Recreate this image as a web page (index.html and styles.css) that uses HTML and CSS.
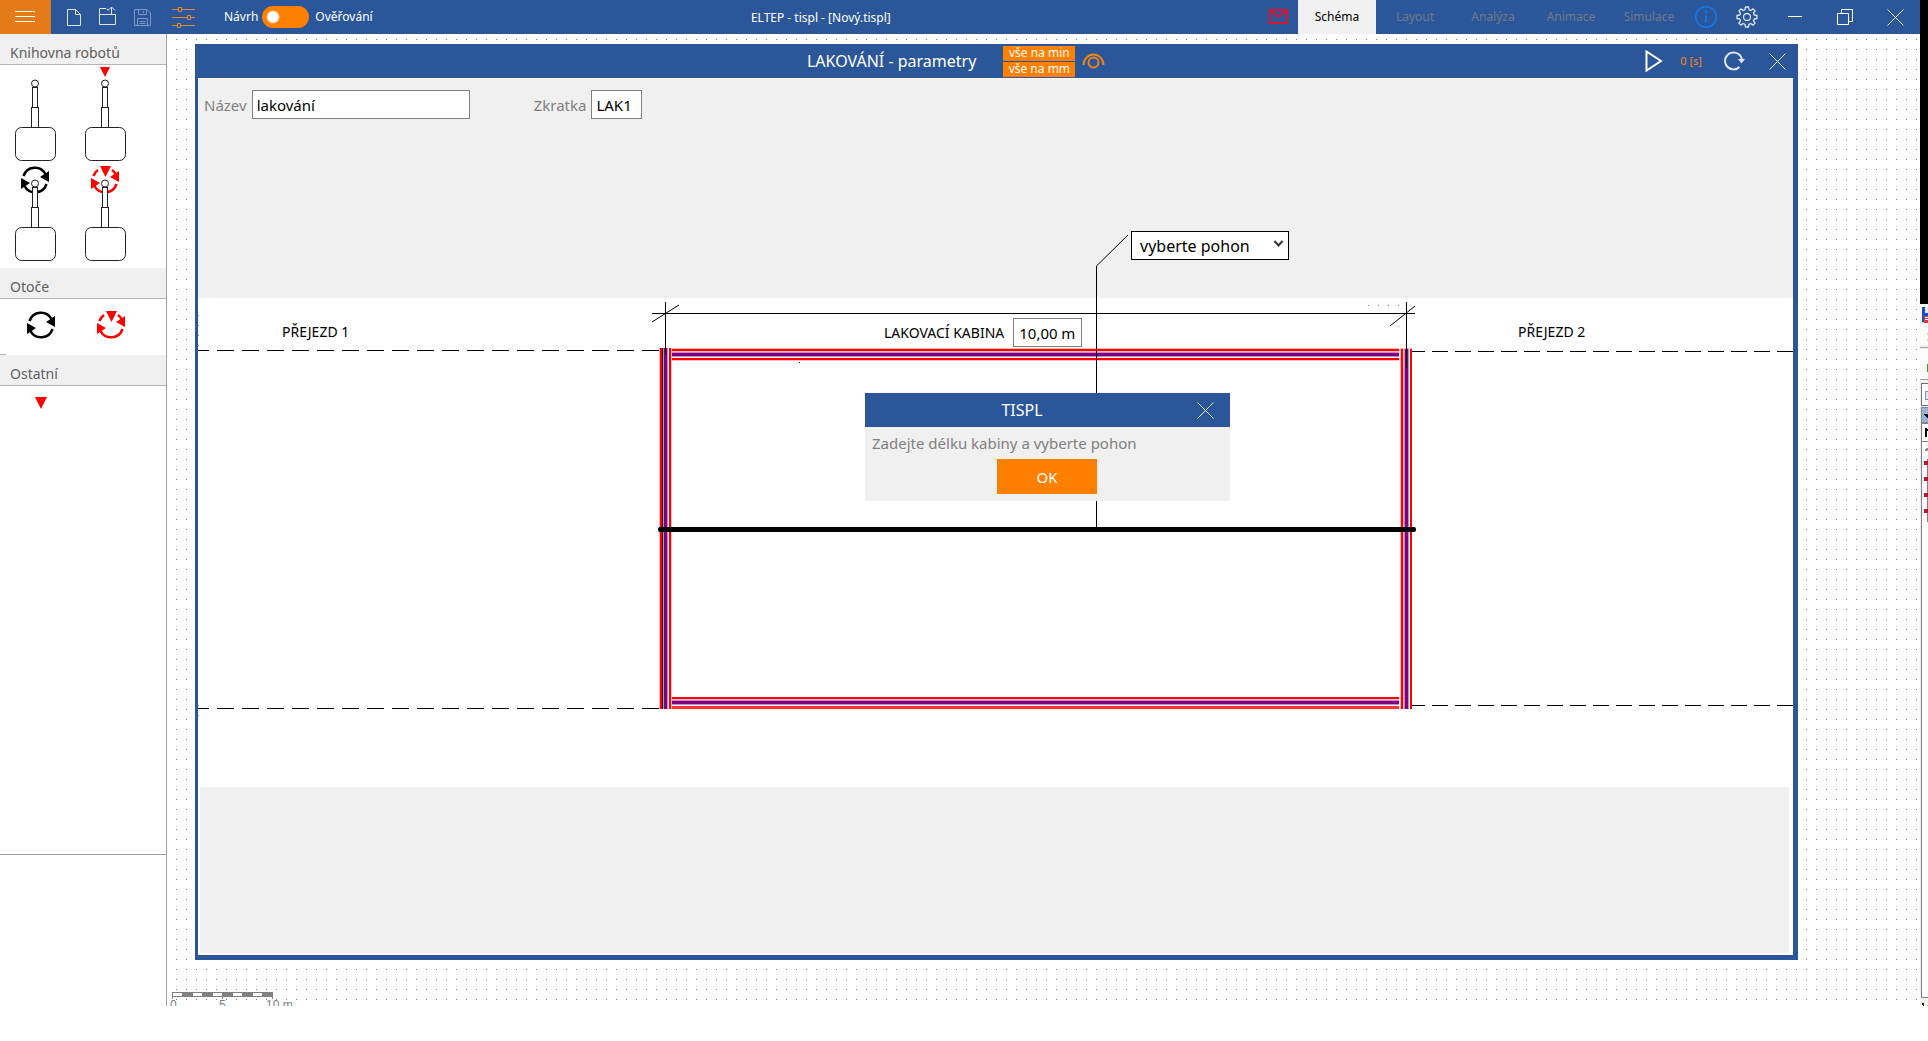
FILE: index.html
```html
<!DOCTYPE html>
<html lang="cs">
<head>
<meta charset="utf-8">
<title>ELTEP - tispl - [Nový.tispl]</title>
<link rel="stylesheet" href="styles.css">
</head>
<body>
<div class="screen">
  <div class="app">
    <header class="topbar">
      <button class="menu-btn" aria-label="Menu"><svg width="20" height="12"><path d="M0 .5H20M0 5.5H20M0 10.5H20" stroke="#fff" fill="none"/></svg></button>
      <div class="tools">
        <button class="icon-btn" aria-label="Nový"><svg width="14" height="17" fill="none" stroke="#dfe6f2"><path d="M.5 .5H8.500L13.500 5.500V16.500H.5ZM8.500 .5V5.500H13.500"/></svg></button>
        <button class="icon-btn open" aria-label="Otevřít"><svg width="17" height="20" fill="none" stroke="#dfe6f2"><path d="M9.500 3.500H8L7 2.500H.5V18.500H16.500V8.500M.5 8.500H16.500M12.500 9V1M9 4.500L12.500 1L16 4.500"/></svg></button>
        <button class="icon-btn" aria-label="Uložit"><svg width="17" height="17" fill="none" stroke="#8098c4"><path d="M.5 .5H13L16.500 4V16.500H.5ZM4.500 .5V5.500H12.500V.5M9.500 2V4M3.500 16V9.500H13.500V16M5.500 12.500H11.500M5.500 14.500H11.500"/></svg></button>
        <button class="icon-btn sliders" aria-label="Nastavení parametrů"><svg width="24" height="24" fill="none" stroke="#e88a2a"><path d="M0 3.500H7M10 3.500H23M0 11.500H15M19 11.500H23M0 19.500H5M9 19.500H23"/><path d="M6.500 1.500H9.500V5.500H6.500ZM15.500 9.500H18.500V13.500H15.500ZM5.500 17.500H8.500V21.500H5.500Z"/></svg></button>
        <label class="mode"><span>Návrh</span><input type="checkbox" role="switch"><span>Ověřování</span></label>
      </div>
      <div class="app-title">ELTEP - tispl - [Nový.tispl]</div>
      <button class="icon-btn mail" aria-label="Zpráva"><svg width="20" height="16" fill="none" stroke="#d8142c" stroke-width="2"><path d="M1 1H18V14H1ZM1 1L9.500 8L18 1"/></svg></button>
      <nav class="tabs">
        <button class="tab active">Schéma</button>
        <button class="tab">Layout</button>
        <button class="tab">Analýza</button>
        <button class="tab">Animace</button>
        <button class="tab">Simulace</button>
      </nav>
      <div class="window-btns">
        <button class="icon-btn" aria-label="Informace"><svg width="24" height="24" fill="none" stroke="#1279e8" stroke-width="1.500"><circle cx="12" cy="12" r="10.300"/><path d="M12 10.500V17.500" stroke-width="2"/><circle cx="12" cy="7" r="1" fill="#1279e8" stroke-width="1"/></svg></button>
        <button class="icon-btn" aria-label="Nastavení"><svg width="24" height="24" viewBox="0 0 24 24" fill="none" stroke="#dfe6f2" stroke-width="1.300"><circle cx="12" cy="12" r="3.500"/><path d="M10.500 2H13.500L14 4.700L15.800 5.500L18.100 3.900L20.100 5.900L18.500 8.200L19.300 10L22 10.500V13.500L19.300 14L18.500 15.800L20.100 18.100L18.100 20.100L15.800 18.500L14 19.300L13.500 22H10.500L10 19.300L8.200 18.500L5.900 20.100L3.900 18.100L5.500 15.800L4.700 14L2 13.500V10.500L4.700 10L5.500 8.200L3.900 5.900L5.900 3.900L8.200 5.500L10 4.700Z" stroke-linejoin="round"/></svg></button>
        <button class="icon-btn" aria-label="Minimalizovat"><svg width="14" height="17"><path d="M0 7.500H14" stroke="#fff"/></svg></button>
        <button class="icon-btn" aria-label="Obnovit"><svg width="17" height="17" fill="none" stroke="#fff"><path d="M.5 4.500H11.500V15.500H.5ZM4.500 4V.5H15.500V12.500H12"/></svg></button>
        <button class="icon-btn" aria-label="Zavřít"><svg width="17" height="17"><path d="M.5 .5L16.500 16.500M16.500 .5L.5 16.500" stroke="#e6ecf5"/></svg></button>
      </div>
    </header>

    <div class="workspace">
      <aside class="library">
        <h2>Knihovna robotů</h2>
        <div class="robots">
          <svg width="140" height="203" fill="none" stroke="#222">
            <defs>
              <g id="robot"><rect x="-2.500" y="22.500" width="5" height="20" fill="#fff"/><rect x="-3.500" y="42.500" width="7" height="20" fill="#fff"/><rect x="-19.500" y="62.500" width="40" height="33" rx="6"/><circle cy="18.500" r="3.500" fill="#fff"/></g>
              <g id="rotator"><path d="M-11.500 -4A12 12 0 0 1 10.500 -6" fill="none" stroke-width="2.500"/><path d="M5 -3L14 -9V2Z" stroke="none"/><path d="M11.500 4A12 12 0 0 1 -10.500 6" fill="none" stroke-width="2.500"/><path d="M-5 3L-14 9V-2Z" stroke="none"/></g>
              <g id="rotator-passive" stroke="#f00" fill="#f00"><path d="M-11.500 -4A12 12 0 0 1 -7 -10M7 -10A12 12 0 0 1 10.500 -6" fill="none" stroke-width="2.500"/><path d="M5 -3L14 -9V2Z" stroke="none"/><path d="M11.500 4A12 12 0 0 1 -10.500 6" fill="none" stroke-width="2.500"/><path d="M-5 3L-14 9V-2Z" stroke="none"/><path d="M-5 -14H6L.5 -3Z" stroke="none"/></g>
            </defs>
            <use href="#robot" x="35" y="0"/>
            <path d="M100 2H110L105 12Z" fill="#f00" stroke="none"/>
            <use href="#robot" x="105" y="0"/>
            <use href="#rotator" x="35" y="115" fill="#000" stroke="#000"/>
            <use href="#robot" x="35" y="100"/>
            <use href="#rotator-passive" x="105" y="115"/>
            <use href="#robot" x="105" y="100"/>
          </svg>
        </div>
        <h2>Otoče</h2>
        <div class="rotators">
          <svg width="140" height="56"><use href="#rotator" x="41" y="26" fill="#000" stroke="#000"/><use href="#rotator-passive" x="111" y="26"/><path d="M0 55.500H6" stroke="#b4b4b4"/></svg>
        </div>
        <h2>Ostatní</h2>
        <div class="others">
          <svg width="140" height="30"><path d="M35 11H47L41 23Z" fill="#f00"/></svg>
        </div>
        <div class="library-foot"></div>
      </aside>

      <main class="canvas">
        <section class="params">
          <header class="params-bar">
            <div class="params-head">
              <h1>LAKOVÁNÍ - parametry</h1>
              <div class="units"><button>vše na min</button><button>vše na mm</button></div>
              <button class="icon-btn" aria-label="Zobrazení"><svg width="24" height="16" fill="none" stroke="#f08418" stroke-width="2"><path d="M1.500 12A10 10.500 0 0 1 21.500 12"/><circle cx="11.500" cy="9.500" r="5"/></svg></button>
            </div>
            <button class="icon-btn play" aria-label="Spustit"><svg width="18" height="22" fill="none" stroke="#fff" stroke-width="2"><path d="M1.500 1.500L16 11L1.500 20.500Z"/></svg></button>
            <span class="elapsed">0 [s]</span>
            <button class="icon-btn reload" aria-label="Obnovit výpočet"><svg width="22" height="20" fill="none" stroke="#dfe6f2" stroke-width="2"><path d="M15.500 16A8.500 8.500 0 1 1 18 9"/><path d="M14 8H21L17.500 12.500Z" fill="#dfe6f2" stroke="none"/></svg></button>
            <button class="icon-btn" aria-label="Zavřít parametry"><svg width="17" height="17"><path d="M.5 .5L16.500 16.500M16.500 .5L.5 16.500" stroke="#e6ecf5"/></svg></button>
          </header>
          <div class="params-body">
            <form class="fields">
              <label for="name">Název</label><input id="name" class="field-name" value="lakování">
              <label for="abbr">Zkratka</label><input id="abbr" class="field-abbr" value="LAK1">
            </form>
            <div class="stage"></div>
            <div class="lower"></div>

            <svg class="drawing" width="100%" height="640">
              <g stroke="#000" stroke-dasharray="17 8">
                <line x1="0" y1="271.500" x2="461" y2="271.500" stroke-dashoffset="6"/>
                <line x1="0" y1="629.500" x2="461" y2="629.500" stroke-dashoffset="6"/>
                <line x1="1211" y1="272.500" x2="100%" y2="272.500" stroke-dasharray="16 7"/>
                <line x1="1211" y1="626.500" x2="100%" y2="626.500" stroke-dasharray="16 7"/>
              </g>
              <g>
                <rect x="461" y="269" width="13" height="361" fill="#fbb"/>
                <rect x="462" y="269" width="2" height="361" fill="#f00"/>
                <rect x="464" y="269" width="1" height="361"/>
                <rect x="465" y="269" width="5" height="361" fill="#c48cc4"/>
                <rect x="466" y="269" width="3" height="361" fill="#800080"/>
                <rect x="470" y="269" width="1" height="361" fill="#fff"/>
                <rect x="471" y="269" width="2" height="361" fill="#f00"/>
              </g>
              <g>
                <rect x="474" y="269" width="727" height="13" fill="#fbb"/>
                <rect x="474" y="270" width="727" height="2" fill="#f00"/>
                <rect x="474" y="273" width="727" height="5" fill="#c48cc4"/>
                <rect x="474" y="274" width="727" height="3" fill="#800080"/>
                <rect x="474" y="278" width="727" height="1" fill="#fff"/>
                <rect x="474" y="279" width="727" height="2" fill="#f00"/>
              </g>
              <g>
                <rect x="1202" y="269" width="12" height="361" fill="#fbb"/>
                <rect x="1203" y="270" width="2" height="360" fill="#f00"/>
                <rect x="1206" y="270" width="5" height="360" fill="#c48cc4"/>
                <rect x="1207" y="270" width="3" height="360" fill="#800080"/>
                <rect x="1211" y="270" width="1" height="360" fill="#fff"/>
                <rect x="1212" y="270" width="2" height="360" fill="#f00"/>
              </g>
              <g>
                <rect x="474" y="618" width="727" height="12" fill="#fbb"/>
                <rect x="474" y="618" width="727" height="2" fill="#f00"/>
                <rect x="474" y="621" width="727" height="5" fill="#c48cc4"/>
                <rect x="474" y="622" width="727" height="3" fill="#800080"/>
                <rect x="474" y="626" width="727" height="1" fill="#fff"/>
                <rect x="474" y="627" width="727" height="3" fill="#f33"/>
              </g>
              <g stroke="#000">
                <path d="M454 234.500H1217M467.500 223V276M1208.500 223V289M898.500 187V448" fill="none"/>
                <path d="M454 243L481 226M1192 247L1217 227M898.500 187L930 156" fill="none"/>
              </g>
              <rect x="460" y="448" width="758" height="5" rx="2"/>
              <path d="M1170 226.500H1203" stroke="#888" stroke-dasharray="1 9"/>
              <path d="M.5 236V267M.5 626V667" stroke="#888" stroke-dasharray="1 9"/>
              <rect x="601" y="283" width="1" height="1"/>
            </svg>

            <span class="mark passage-1">PŘEJEZD 1</span>
            <span class="mark passage-2">PŘEJEZD 2</span>
            <div class="cabin">
              <label class="mark" for="length">LAKOVACÍ KABINA</label>
              <span class="length-box"><input id="length" value="10,00">m</span>
            </div>
            <div class="drive">
              <select aria-label="Pohon"><option>vyberte pohon</option></select>
              <svg width="12" height="10" fill="none" stroke="#333" stroke-width="2"><path d="M1.500 2L5.500 6.500L9.500 2"/></svg>
            </div>

            <div class="dialog" role="dialog" aria-label="TISPL">
              <div class="dialog-bar"><span>TISPL</span><button class="icon-btn" aria-label="Zavřít zprávu"><svg width="17" height="17"><path d="M.5 .5L16.500 16.500M16.500 .5L.5 16.500" stroke="#e6ecf5"/></svg></button></div>
              <p>Zadejte délku kabiny a vyberte pohon</p>
              <button class="ok">OK</button>
            </div>
          </div>
        </section>

        <svg class="scale" width="130" height="18" fill="#808080">
          <path d="M0 0H101V5H0Z"/><path d="M0 5H1V7H0ZM50 5H51V7H50ZM100 5H101V7H100Z"/>
          <path d="M1 1H10V4H1ZM21 1H30V4H21ZM41 1H50V4H41ZM61 1H70V4H61ZM81 1H90V4H81Z" fill="#fff"/>
          <g class="scale-text"><text x="-2" y="17">0</text><text x="47" y="17">5</text><text x="94" y="17">10 m</text></g>
        </svg>
      </main>
    </div>
  </div>

  <aside class="neighbour">
    <svg width="8" height="702" shape-rendering="crispEdges">
      <path fill="#fcfcfc" d="M0 0H8V41H0ZM0 45H8V75H0Z"/>
      <path fill="#1c4ec8" d="M2 3H5V18H2ZM5 9H8V12H5Z"/><path fill="#e8e0ff" d="M5 3H8V9H5Z"/><path fill="#d23c3c" d="M4 12H8V19H4Z"/><path fill="#fff" d="M5 13H8V14H5ZM5 15H8V16H5Z"/>
      <path fill="#f4d890" d="M7 29H8V31H7ZM7 35H8V37H7Z"/><path fill="#4c9a10" d="M7 60H8V68H7Z"/>
      <path fill="#a0a0a0" d="M0 43H8V44H0ZM0 75H8V76H0Z"/>
      <path fill="#707078" d="M1 79H8V102H1Z"/><path fill="#fff" d="M2 80H8V101H2Z"/><path fill="#8c8cb0" d="M5 87H8V96H5Z"/><path fill="#e4e4f4" d="M6 88H8V95H6Z"/>
      <path fill="#808890" d="M1 103H8V119H1Z"/><path fill="#99b4d1" d="M2 104H8V118H2Z"/><path d="M4 110H8V114H7V113H6V112H5V111H4Z"/>
      <path fill="#808080" d="M1 119H8V694H1Z"/><path fill="#fff" d="M2 120H8V137H2ZM2 138H8V693H2Z"/><path d="M5 124H7V133H5ZM7 125H8V127H7Z"/>
      <path fill="#909090" d="M5 145H6V144H8V147H5Z"/>
      <path fill="#b06878" d="M7 155H8V218H7Z"/><path fill="#b01c2c" d="M4 157H8V161H4ZM4 173H8V177H4ZM4 189H8V193H4ZM4 205H8V209H4Z"/>
      <path d="M2 699H4V702H3V701H2Z"/><path fill="#e8a030" d="M7 701H8V702H7Z"/>
    </svg>
  </aside>
</div>
</body>
</html>
```
FILE: styles.css
```css
* { box-sizing: border-box; }

body {
  margin: 0;
  background: #fff;
  color: #000;
  font: 15px/20px "Noto Sans", sans-serif;
}

button, input, select { font: inherit; color: inherit; }
button { border: 0; padding: 0; background: none; }
h1, h2, p { margin: 0; font-weight: 400; }
svg { display: block; }

.screen {
  display: grid;
  grid-template-columns: 1fr 8px;
  min-height: calc(100vh - 35px);
}

.app { display: flex; flex-direction: column; min-width: 0; }

/* Top bar */
.topbar {
  display: flex;
  height: 34px;
  background: #2b579a;
  color: #fff;
  font-size: 12px;
}
.menu-btn {
  display: grid;
  place-items: center;
  width: 51px;
  padding-right: 2px;
  background: #e27b18;
}
.tools { display: flex; align-items: center; padding-left: 16px; gap: 18px; }
.icon-btn { display: grid; place-items: center; flex: none; }
.icon-btn.open { margin-bottom: 2px; }
.sliders { margin: 2px 0 0 3px; }
.mode { display: flex; align-items: center; gap: 4px; margin-left: 10px; }
.mode input {
  appearance: none;
  width: 47px;
  height: 22px;
  margin: 0;
  border-radius: 11px;
  background: radial-gradient(circle at 11px 11px, #fff 5px, #ff8000 7px);
}
.mode span:last-child { margin-left: 2px; }
.app-title { flex: 1; line-height: 35px; text-align: center; white-space: nowrap; }
.mail { margin-right: 9px; }
.tabs { display: flex; }
.tab { width: 78px; color: #70798a; }
.tab.active { background: #f0f0f0; color: #000; }
.window-btns { display: flex; align-items: center; gap: 35px; padding: 0 16px 0 6px; }
.window-btns .icon-btn:first-child { margin-right: -18px; }
.window-btns .icon-btn:nth-child(2) { margin-right: -6px; }
.window-btns .icon-btn:nth-child(4) { margin-right: -2px; }

.workspace { flex: 1; display: flex; }

/* Library */
.library {
  display: flex;
  flex-direction: column;
  flex: none;
  width: 167px;
  border-right: 1px solid #a0a0a0;
}
.library h2 {
  height: 31px;
  padding: 5px 0 0 10px;
  border-bottom: 1px solid #b4b4b4;
  background: #f0f0f0;
  color: #606060;
  font-size: 14px;
  line-height: 28px;
}
.others { flex: 1; }
.library-foot { height: 152px; border-top: 1px solid #a0a0a0; }

/* Canvas */
.canvas {
  position: relative;
  flex: 1;
  display: flex;
  padding: 10px 122px 46px 28px;
  overflow: hidden;
  background: conic-gradient(from 270deg at 1px 1px, #808080 90deg, #fff 0) 9px 5px / 10px 10px;
}
.scale { position: absolute; left: 5px; bottom: -4px; overflow: visible; }
.scale-text { font: 12px "Liberation Sans", sans-serif; }

/* Parameters window */
.params {
  flex: 1;
  display: flex;
  flex-direction: column;
  min-width: 0;
  border: solid #2b579a;
  border-width: 0 5px 5px 3px;
  background: #fff;
}
.params-bar {
  display: flex;
  align-items: center;
  height: 34px;
  padding-right: 7px;
  background: #2b579a;
  color: #fff;
}
.params-head {
  flex: 1;
  display: flex;
  justify-content: center;
  align-items: center;
  padding-left: 70px;
}
.params-head h1 { margin-right: 27px; font-size: 16px; }
.units { display: grid; gap: 1px; margin-right: 7px; }
.units button {
  width: 72px;
  height: 15px;
  background: #ff8000;
  font-size: 12px;
  line-height: 14px;
}
.play { margin-right: 17px; }
.elapsed { margin-right: 22px; color: #f08418; font-size: 11px; }
.reload { margin-right: 23px; }

.params-body {
  position: relative;
  flex: 1;
  display: grid;
  grid-template-rows: 219px 489px 1fr;
  margin-top: 1px;
}
.fields {
  display: flex;
  align-items: flex-start;
  padding: 11px 6px;
  background: #f0f0f0;
  color: #808080;
  line-height: 30px;
}
.fields input {
  height: 29px;
  margin: 0;
  padding: 1px 4px 0;
  border: 1px solid #808080;
  background: #fff;
  color: #000;
}
.fields label { margin-right: 5px; }
.field-name { width: 218px; }
.field-name + label { margin-left: 64px; }
.field-abbr { width: 51px; }
.lower { margin: 0 4px 2px 2px; background: #f0f0f0; }

/* Cabin drawing and what is placed on it */
.drawing { position: absolute; left: 0; top: 0; pointer-events: none; }
.mark { font-size: 14px; white-space: nowrap; }
.passage-1, .passage-2, .cabin, .drive, .dialog { position: absolute; }
.passage-1 { left: 84px; top: 243px; }
.passage-2 { left: 1320px; top: 243px; }
.cabin { display: flex; align-items: center; gap: 9px; left: 686px; top: 239px; }
.length-box {
  display: flex;
  align-items: center;
  width: 69px;
  height: 29px;
  padding-left: 5px;
  border: 1px solid #808080;
  background: #fff;
}
.length-box input {
  width: 42px;
  padding: 0;
  border: 0;
  background: none;
  font-size: 15px;
}
.drive { left: 933px; top: 152px; }
.drive select {
  appearance: none;
  display: block;
  width: 158px;
  height: 29px;
  padding: 0 8px;
  border: 1px solid #000;
  border-radius: 0;
  background: #fff;
  font-size: 16px;
}
.drive svg { position: absolute; right: 4px; top: 8px; pointer-events: none; }

.dialog {
  left: 667px;
  top: 314px;
  width: 365px;
  padding-bottom: 7px;
  background: #f0f0f0;
  color: #808080;
}
.dialog-bar {
  display: flex;
  align-items: center;
  height: 34px;
  padding-right: 16px;
  background: #2b579a;
  color: #fff;
}
.dialog-bar span { flex: 1; padding-right: 18px; font-size: 16px; text-align: center; }
.dialog p { padding: 6px 7px; }
.ok {
  display: block;
  width: 100px;
  height: 35px;
  margin: 0 132px;
  background: #ff8000;
  color: #fff;
}

/* Edge of the neighbouring window */
.neighbour { padding-top: 304px; background: linear-gradient(#000 304px, #f0f0f0 0); }
```
